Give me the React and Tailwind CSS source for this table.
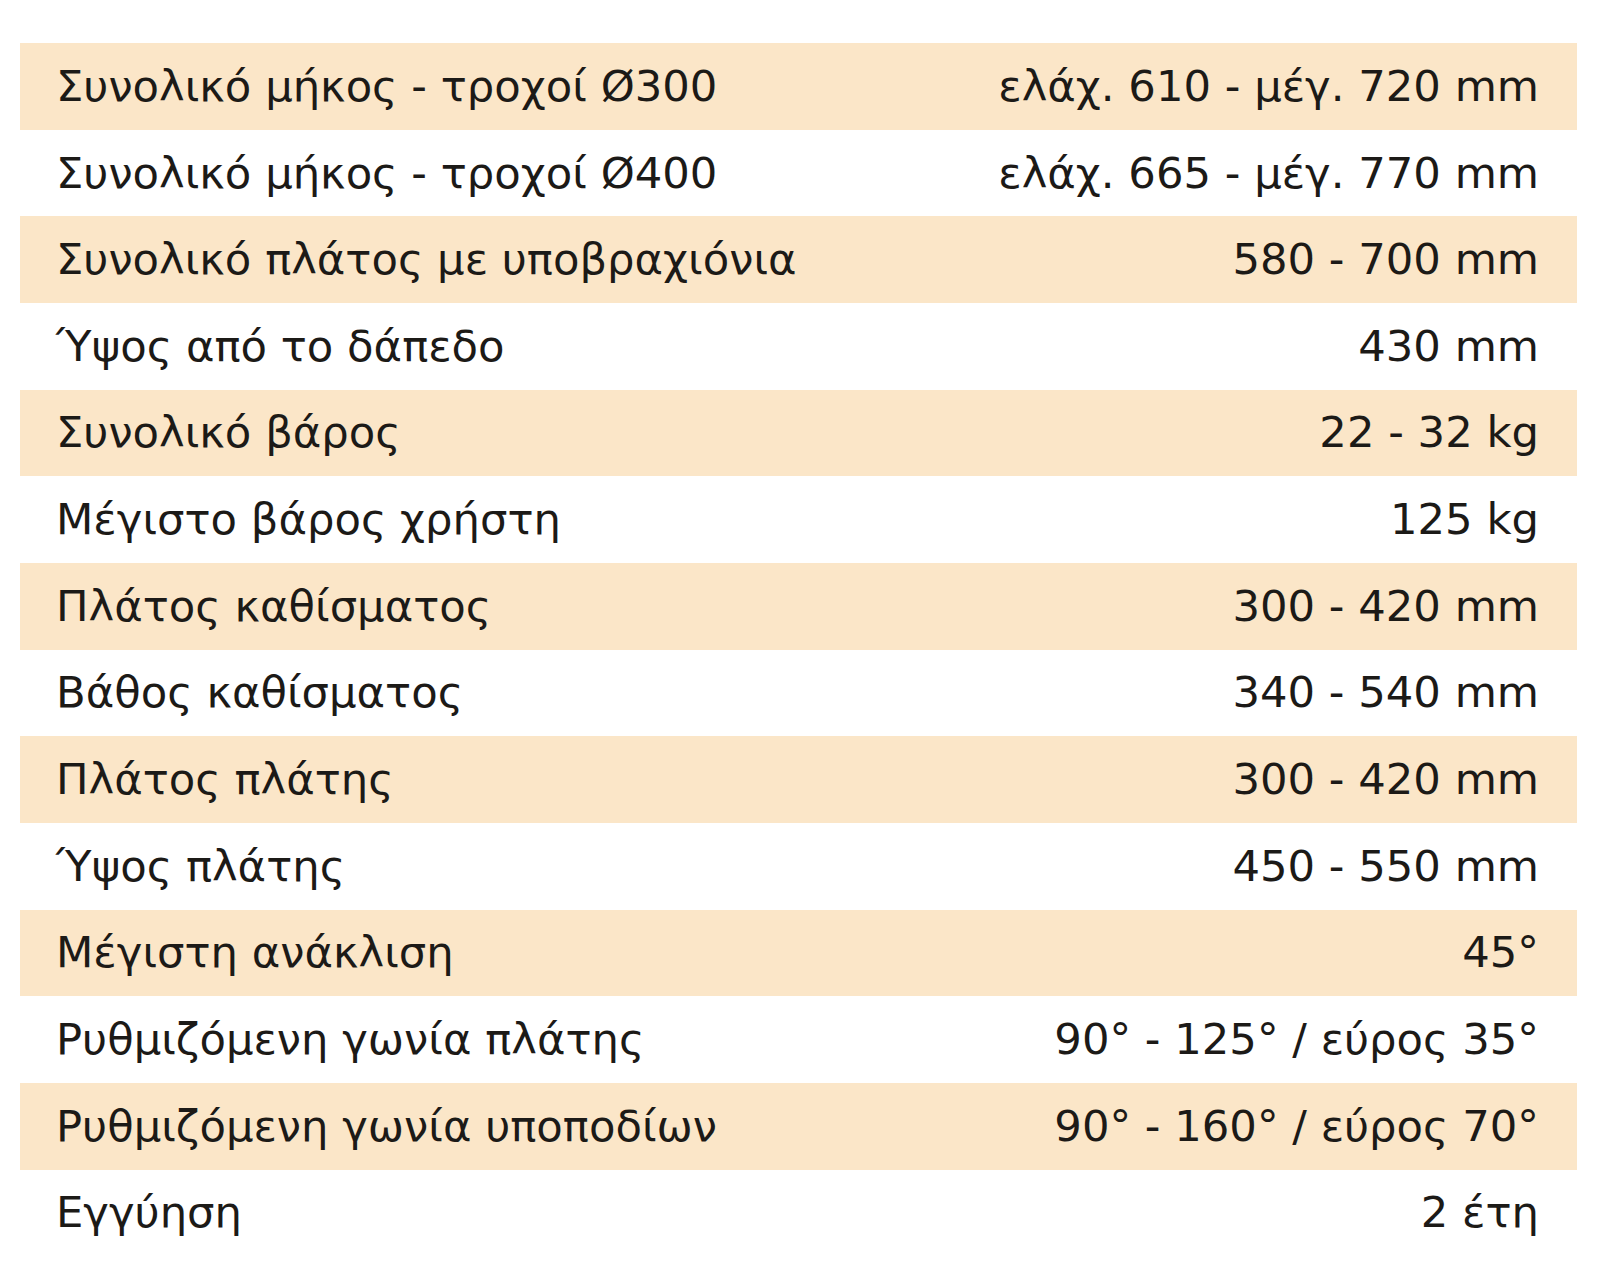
import React from "react";

const rows = [
    ["Συνολικό μήκος - τροχοί Ø300", "ελάχ. 610 - μέγ. 720 mm"],
    ["Συνολικό μήκος - τροχοί Ø400", "ελάχ. 665 - μέγ. 770 mm"],
    ["Συνολικό πλάτος με υποβραχιόνια", "580 - 700 mm"],
    ["Ύψος από το δάπεδο", "430 mm"],
    ["Συνολικό βάρος", "22 - 32 kg"],
    ["Μέγιστο βάρος χρήστη", "125 kg"],
    ["Πλάτος καθίσματος", "300 - 420 mm"],
    ["Βάθος καθίσματος", "340 - 540 mm"],
    ["Πλάτος πλάτης", "300 - 420 mm"],
    ["Ύψος πλάτης", "450 - 550 mm"],
    ["Μέγιστη ανάκλιση", "45°"],
    ["Ρυθμιζόμενη γωνία πλάτης", "90° - 125° / εύρος 35°"],
    ["Ρυθμιζόμενη γωνία υποποδίων", "90° - 160° / εύρος 70°"],
    ["Εγγύηση", "2 έτη"],
];

const App = () => {
    return (
        <div className="w-[1600px] min-h-[1277px] bg-white pt-[43px] pl-[20px]">
            <div className="w-[1557px] flex flex-col font-['DejaVu_Sans',sans-serif] text-[43.3px] text-[#1c1a17]">
                {rows.map((r, i) => (
                    <div
                        key={i}
                        className={
                            "h-[86.67px] flex items-center justify-between pl-[36px] pr-[38px] " +
                            (i % 2 === 0 ? "bg-[#fbe6c8]" : "bg-white")
                        }
                    >
                        <span>{r[0]}</span>
                        <span>{r[1]}</span>
                    </div>
                ))}
            </div>
        </div>
    );
};

export default App;
